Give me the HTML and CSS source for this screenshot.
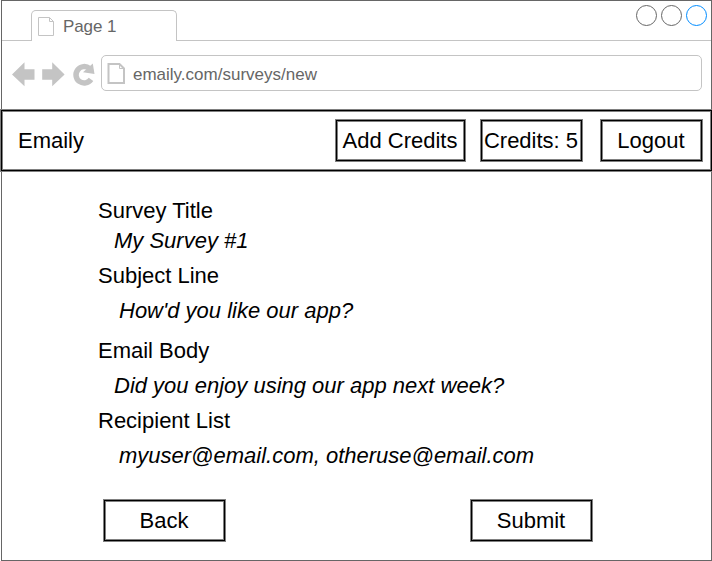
FILE: index.html
```html
<!DOCTYPE html>
<html lang="en">
<head>
<meta charset="utf-8">
<title>Emaily</title>
<link rel="stylesheet" href="styles.css">
</head>
<body>
<div class="window">
  <div class="tabs">
    <div class="tab">
      <svg class="tab-icon" width="17" height="20" viewBox="0 0 17 20"><path d="M1.5 0.5H12.5L16.5 4.5V18.5H1.5ZM12.5 0.5V4.5H16.5"/></svg>
      <span>Page 1</span>
    </div>
    <div class="strip"></div>
    <svg class="controls" width="76" height="24" viewBox="0 0 76 24"><circle cx="11.5" cy="10.5" r="10"/><circle cx="36.5" cy="10.5" r="10"/><circle class="blue" cx="61.5" cy="10.5" r="10"/></svg>
  </div>
  <div class="toolbar">
    <svg class="nav" width="84" height="26" viewBox="0 0 84 26">
      <path d="M0 13.5L12.5 1.2V8.3H22.5V18.7H12.5V25.2Z"/>
      <path d="M52.6 13.5L40.2 1.2V8.3H30.2V18.7H40.2V25.2Z"/>
      <path class="reload" d="M79 18.4A8.2 8.2 0 1 1 77.6 7.6"/>
      <path d="M80.8 2.5L82.5 13L71 11.3Z"/>
    </svg>
    <div class="address">
      <svg class="url-icon" width="19" height="21" viewBox="0 0 19 21"><path d="M1.5 1H12.5L17 5.5V20H1.5Z"/><path class="fold" d="M12.5 1.5V5.5H17"/></svg>
      <span>emaily.com/surveys/new</span>
    </div>
  </div>
  <header class="header outlined">
    <div class="brand">Emaily</div>
    <div class="box outlined add">Add Credits</div>
    <div class="box outlined credits">Credits: 5</div>
    <div class="box outlined logout">Logout</div>
  </header>
  <main class="form">
    <div class="label">Survey Title</div>
    <div class="value">My Survey #1</div>
    <div class="label subject">Subject Line</div>
    <div class="value indented">How'd you like our app?</div>
    <div class="label body">Email Body</div>
    <div class="value spaced">Did you enjoy using our app next week?</div>
    <div class="label recipients">Recipient List</div>
    <div class="value indented">myuser@email.com, otheruse@email.com</div>
    <div class="actions">
      <div class="box outlined action">Back</div>
      <div class="box outlined action">Submit</div>
    </div>
  </main>
</div>
</body>
</html>
```
FILE: styles.css
```css
* { box-sizing: border-box; }
body {
  margin: 0;
  background: #fff;
  color: #000;
  font: 22px/30px "Liberation Sans", Arial, sans-serif;
  white-space: nowrap;
  overflow: hidden;
}
svg { display: block; flex: none; fill: none; }
.window {
  width: 711px;
  height: 561px;
  margin-left: 1px;
  border: 1px solid #666;
}
.tabs { display: flex; height: 40px; padding-top: 9px; }
.tabs::before { content: ""; width: 29px; border-bottom: 1px solid #c4c4c4; }
.tab {
  display: flex;
  width: 146px;
  height: 31px;
  padding: 6px 0 0 5px;
  border: 1px solid #c4c4c4;
  border-bottom: 0;
  border-radius: 5px 5px 0 0;
  color: #666;
  font-size: 17px;
  line-height: 20px;
}
.tab span { margin-left: 9px; letter-spacing: -0.1px; }
.tab-icon { stroke: #c4c4c4; }
.strip { flex: 1; border-bottom: 1px solid #c4c4c4; }
.controls { margin: -5px 0 0 -76px; stroke: #666; }
.controls .blue { stroke: #008cff; }
.toolbar { display: flex; height: 68px; padding: 14px 9px 0 10px; }
.nav { margin-top: 6px; fill: #c4c4c4; }
.nav .reload { fill: none; stroke: #c4c4c4; stroke-width: 5.5; }
.address {
  display: flex;
  flex: 1;
  height: 36px;
  margin-left: 5px;
  padding: 8px 0 0 5px;
  border: 1px solid #c4c4c4;
  border-radius: 5px;
  color: #666;
  font-size: 17px;
  line-height: 21px;
}
.address span { margin-left: 7px; }
.url-icon { margin-top: -1px; stroke: #c4c4c4; stroke-width: 2; }
.url-icon .fold { stroke-width: 1; }
.outlined {
  border: 1px solid #808080;
  box-shadow: inset 0 0 0 1px #000, inset 0 0 0 2px #808080;
}
.header {
  display: flex;
  height: 63px;
  margin: 0 -2px 0 -2px;
  padding: 9px 9px 0 17px;
}
.brand { flex: 1; line-height: 43px; }
.box { height: 43px; padding-right: 1px; text-align: center; line-height: 41px; }
.add { width: 131px; }
.credits { width: 103px; margin-left: 14px; }
.logout { width: 103px; margin-left: 17px; }
.form { padding: 24px 0 0 96px; }
.value { padding-left: 16px; font-style: italic; }
.indented { padding-left: 21px; margin-top: 5px; }
.subject { margin-top: 5px; }
.body { margin-top: 10px; }
.spaced { margin-top: 5px; }
.recipients { margin-top: 5px; }
.actions { display: flex; gap: 244px; margin: 28px 0 0 5px; }
.action { width: 123px; }
```
